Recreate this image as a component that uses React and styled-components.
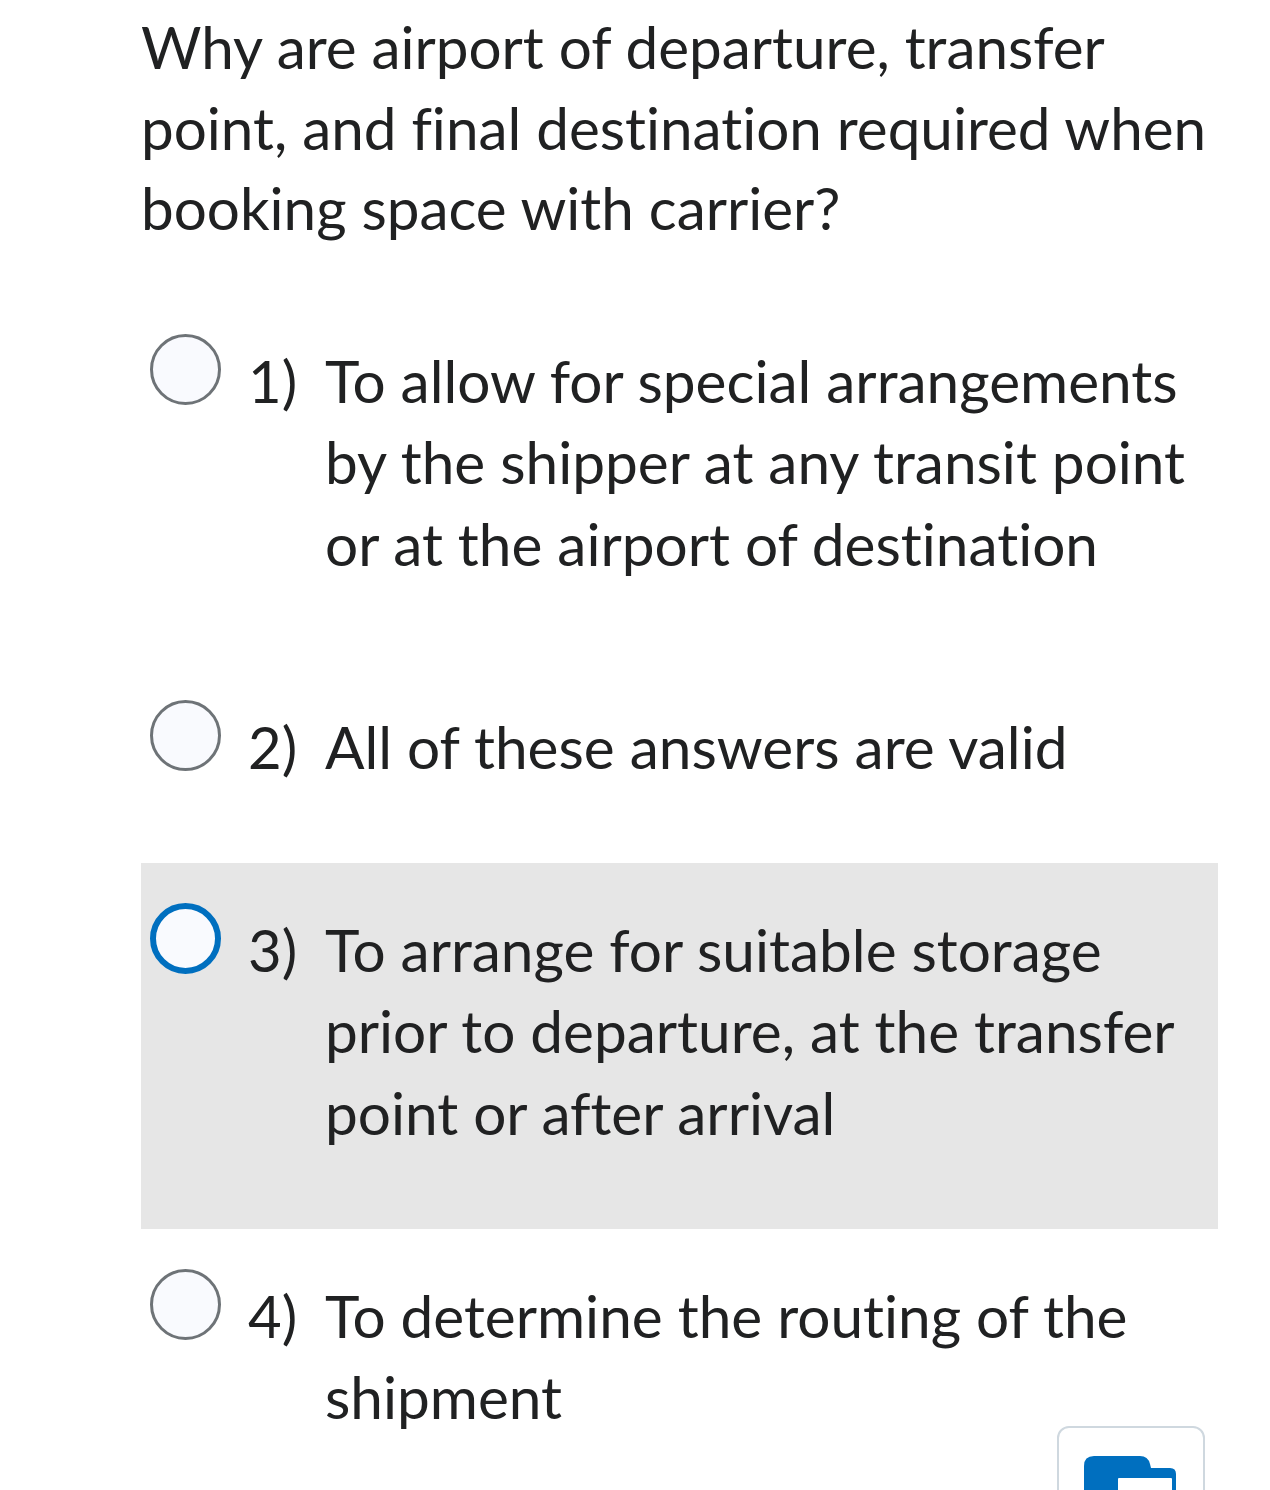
import React from "react";
import styled, { createGlobalStyle } from "styled-components";

const Global = createGlobalStyle`
  html, body { margin: 0; padding: 0; background: #ffffff; }
  body {
    font-family: Lato, "Open Sans", sans-serif;
    color: #202122;
    font-variant-ligatures: none;
    font-feature-settings: "liga" 0, "clig" 0;
  }
`;

const Page = styled.div`
  position: relative;
  width: 1270px;
  min-height: 1490px;
  padding: 6px 52px 0 141px;
  box-sizing: border-box;
  overflow: hidden;
`;

const Question = styled.h1`
  margin: 0 0 46px 0;
  font-size: 58.4px;
  font-weight: 400;
  line-height: 80.5px;
  letter-spacing: 0;
`;

const Options = styled.div`
  display: flex;
  flex-direction: column;
`;

const Option = styled.label`
  display: grid;
  grid-template-columns: 72px 103px 1fr;
  align-items: start;
  padding: 40px 30px 75.5px 9px;
  background: ${(p) => (p.$active ? "#e6e6e6" : "transparent")};
`;

const Radio = styled.span`
  display: block;
  width: 71px;
  height: 71px;
  box-sizing: border-box;
  border-radius: 50%;
  background: #f9fafe;
  border: ${(p) => (p.$active ? "6px solid #006fbf" : "3px solid #6e7377")};
`;

const Num = styled.span`
  padding: 6px 0 0 26px;
  font-size: 58px;
  line-height: 81.5px;
  white-space: nowrap;
`;

const Text = styled.span`
  padding-top: 6px;
  font-size: 58.5px;
  line-height: 81.5px;
`;

const FloatButton = styled.div`
  position: absolute;
  left: 1057px;
  top: 1426px;
  width: 148px;
  height: 100px;
  box-sizing: border-box;
  border: 2px solid #cfd8df;
  border-radius: 12px;
  background: #ffffff;
  display: flex;
  justify-content: center;
  padding-top: 28px;
`;

const FolderIcon = () => (
  <svg width="94" height="60" viewBox="0 0 94 60">
    <path
      d="M0 10 Q0 0 10 0 H56 Q64 0 66 8 L67 12 H86 Q92 12 92 18 V60 H0 Z"
      fill="#006fbf"
    />
    <rect x="32" y="20" width="58" height="40" rx="3" fill="#ffffff" stroke="#006fbf" strokeWidth="4" />
  </svg>
);

const options = [
  "To allow for special arrangements by the shipper at any transit point or at the airport of destination",
  "All of these answers are valid",
  "To arrange for suitable storage prior to departure, at the transfer point or after arrival",
  "To determine the routing of the shipment",
];

export default function App() {
  return (
    <Page>
      <Global />
      <Question>
        Why are airport of departure, transfer point, and final destination required when booking space with carrier?
      </Question>
      <Options>
        {options.map((t, i) => (
          <Option key={i} $active={i === 2}>
            <Radio $active={i === 2} />
            <Num>{i + 1})</Num>
            <Text>{t}</Text>
          </Option>
        ))}
      </Options>
      <FloatButton>
        <FolderIcon />
      </FloatButton>
    </Page>
  );
}
